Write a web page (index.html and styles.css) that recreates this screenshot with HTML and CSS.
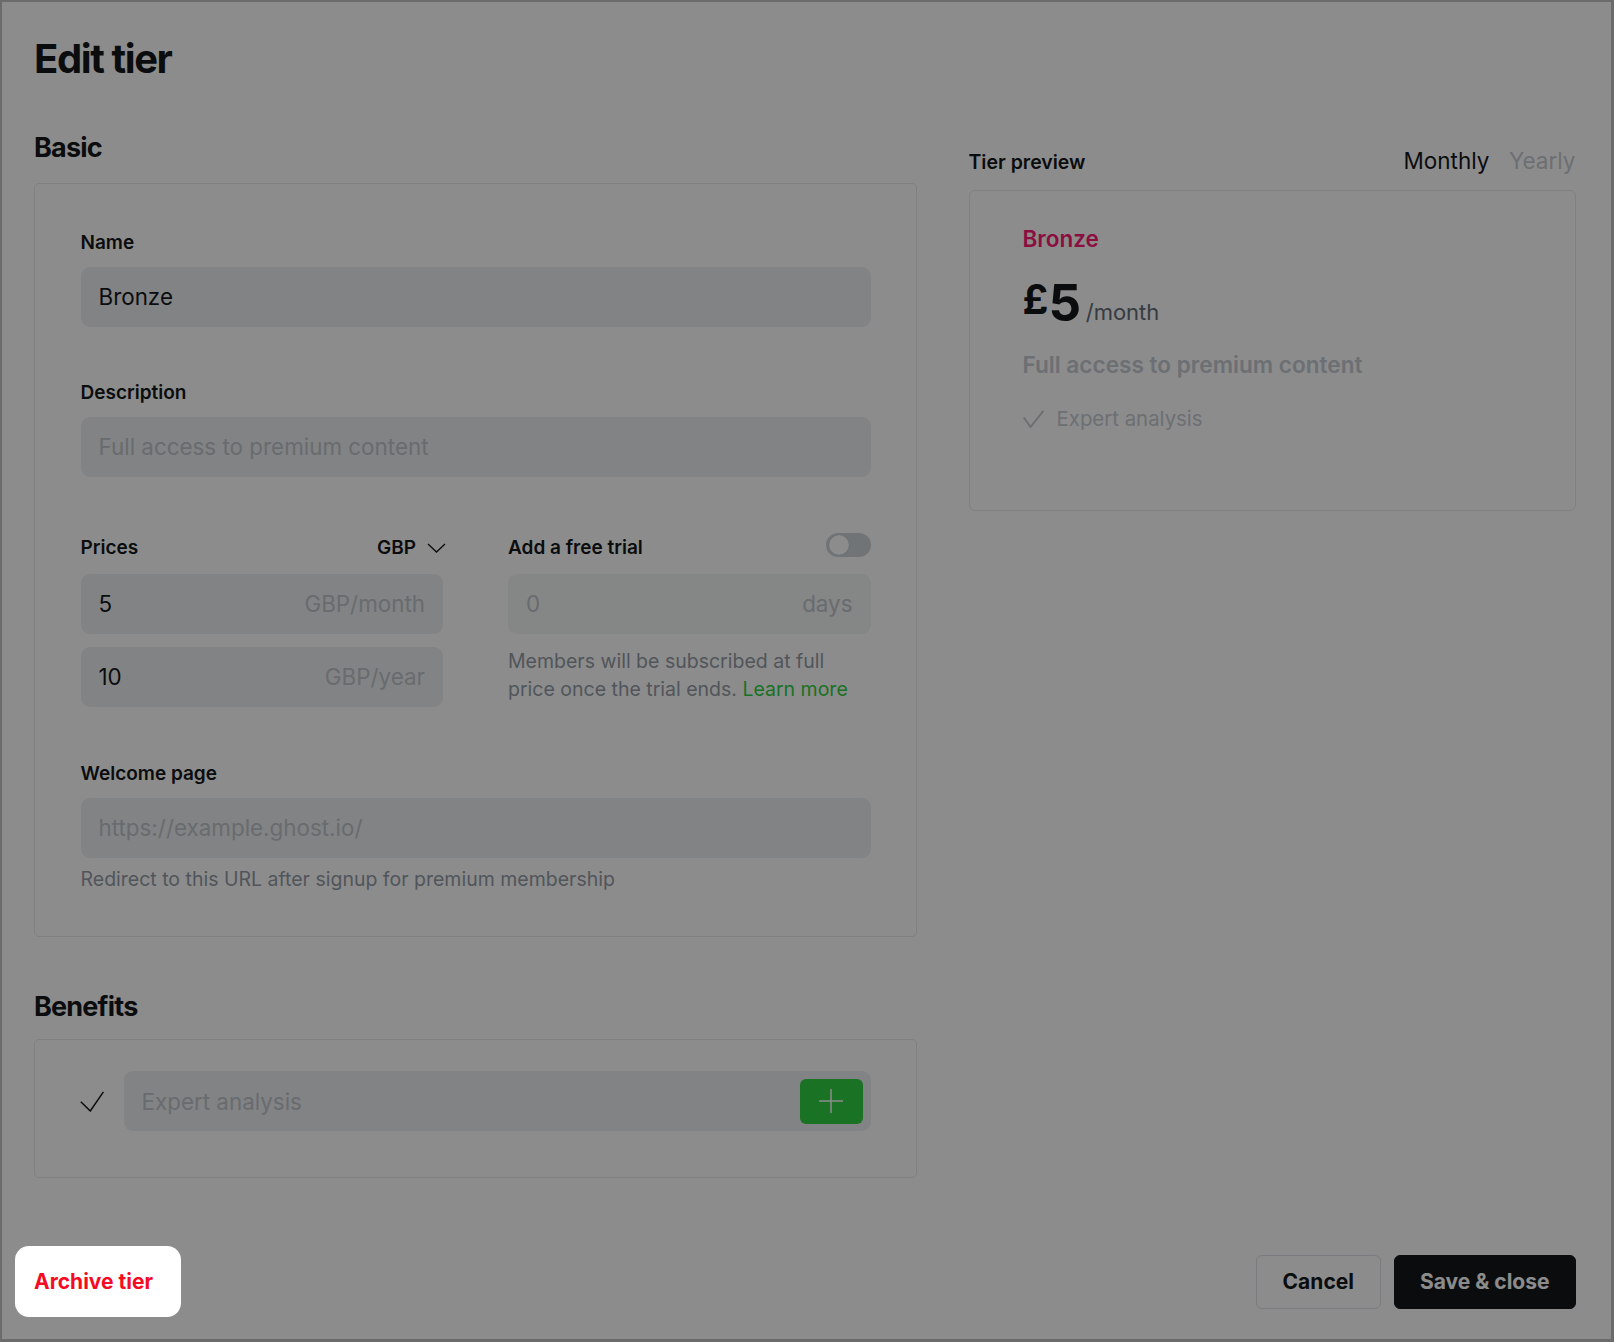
FILE: index.html
```html
<!DOCTYPE html>
<html lang="en">
<head>
<meta charset="utf-8">
<title>Edit tier</title>
<link rel="stylesheet" href="styles.css">
</head>
<body>
<div class="modal">
  <h1 class="title">Edit tier</h1>
  <div class="layout">
    <div class="left">
      <h2 class="section-title">Basic</h2>
      <div class="card basic-card">
        <div class="field">
          <label class="label">Name</label>
          <div class="input"><span class="value">Bronze</span></div>
        </div>
        <div class="field field-desc">
          <label class="label">Description</label>
          <div class="input"><span class="ph">Full access to premium content</span></div>
        </div>
        <div class="prices-row">
          <div class="col">
            <div class="col-head">
              <label class="label">Prices</label>
              <div class="currency">
                <span>GBP</span>
                <svg class="chevron" width="19" height="10" viewBox="0 0 19 10"><polyline points="1,1 9.5,9 18,1" fill="none" stroke="#15171A" stroke-width="1.3"/></svg>
              </div>
            </div>
            <div class="input price"><span class="value">5</span><span class="suffix">GBP/month</span></div>
            <div class="input price price-2"><span class="value">10</span><span class="suffix">GBP/year</span></div>
          </div>
          <div class="col">
            <div class="col-head">
              <label class="label">Add a free trial</label>
              <span class="toggle"><span class="knob"></span></span>
            </div>
            <div class="input price trial"><span class="ph">0</span><span class="suffix">days</span></div>
            <p class="hint hint-trial">Members will be subscribed at full price once the trial ends. <span class="link">Learn more</span></p>
          </div>
        </div>
        <div class="field field-welcome">
          <label class="label">Welcome page</label>
          <div class="input"><span class="ph">https://example.ghost.io/</span></div>
          <p class="hint hint-welcome">Redirect to this URL after signup for premium membership</p>
        </div>
      </div>
      <h2 class="section-title benefits-title">Benefits</h2>
      <div class="card benefits-card">
        <svg class="bcheck" width="24" height="21" viewBox="0 0 24 21"><polyline points="0.8,10.8 10.3,20 23.4,0.8" fill="none" stroke="#15171A" stroke-width="1.5"/></svg>
        <div class="input benefit-input">
          <span class="ph">Expert analysis</span>
          <span class="add-btn"><svg width="26" height="26" viewBox="0 0 26 26"><path d="M13 1V25M1 13H25" stroke="#fff" stroke-width="1.5"/></svg></span>
        </div>
      </div>
    </div>
    <div class="right">
      <div class="preview-head">
        <span class="preview-label">Tier preview</span>
        <div class="tabs"><span class="tab active">Monthly</span><span class="tab">Yearly</span></div>
      </div>
      <div class="preview-card">
        <div class="p-name">Bronze</div>
        <div class="p-price">
          <span class="p-cur">£</span><span class="p-amount">5</span><span class="p-per">/month</span>
        </div>
        <div class="p-desc">Full access to premium content</div>
        <div class="p-benefit">
          <svg width="21" height="18" viewBox="0 0 21 18"><polyline points="0.8,7.5 7.5,17 20.4,0.8" fill="none" stroke="#C5CBD1" stroke-width="2"/></svg>
          <span>Expert analysis</span>
        </div>
      </div>
    </div>
  </div>
  <div class="footer">
    <button class="archive">Archive tier</button>
    <div class="actions">
      <button class="btn cancel">Cancel</button>
      <button class="btn save">Save &amp; close</button>
    </div>
  </div>
</div>
<div class="dim"></div>
</body>
</html>
```
FILE: styles.css
```css
* { box-sizing: border-box; }
html, body { margin: 0; padding: 0; }
body {
  width: 1614px;
  height: 1342px;
  overflow: hidden;
  background: #c4c4c4;
  font-family: Inter, "Noto Sans", sans-serif;
  color: #15171A;
}
.modal {
  margin: 2px 3px 3px 2px;
  height: 1337px;
  background: #fff;
  padding: 32.5px 35.5px 30.5px 32px;
  display: flex;
  flex-direction: column;
}
.title {
  margin: 0;
  font-size: 40px;
  line-height: 48px;
  font-weight: 700;
  letter-spacing: -0.035em;
}
.layout {
  display: grid;
  grid-template-columns: 882.5px 1fr;
  column-gap: 52px;
  margin-top: 48px;
  align-items: start;
}
.section-title {
  margin: 0 0 18px;
  font-size: 27px;
  line-height: 34px;
  font-weight: 700;
  letter-spacing: -0.03em;
}
.benefits-title { margin-top: 53px; margin-bottom: 15px; }
.card {
  border: 1px solid #E6E9EC;
  border-radius: 5px;
}
.basic-card { padding: 45px 45px 43px 45.5px; }
.label {
  display: block;
  font-size: 19px;
  line-height: 27px;
  font-weight: 600;
  margin-bottom: 11px;
}
.input {
  height: 60px;
  border-radius: 9px;
  background: #EDEFF1;
  display: flex;
  align-items: center;
  padding: 0 18px;
  font-size: 22.4px;
}
.ph, .suffix { color: #BEC4CA; }
.suffix { margin-left: auto; }
.field-desc { margin-top: 52px; }
.prices-row {
  margin-top: 57px;
  display: grid;
  grid-template-columns: 1fr 1fr;
  column-gap: 65px;
}
.col-head {
  display: flex;
  justify-content: space-between;
  align-items: flex-start;
  height: 27px;
  margin-bottom: 13px;
}
.col-head .label { margin-bottom: 0; }
.currency {
  display: flex;
  align-items: center;
  gap: 11px;
  font-size: 19px;
  line-height: 27px;
  font-weight: 600;
  margin-right: -3px;
}
.chevron { margin-top: 2px; }
.price-2 { margin-top: 13px; }
.trial { background: #F2F4F5; }
.toggle {
  position: relative;
  width: 45px;
  height: 24px;
  border-radius: 12px;
  background: #CED4D9;
  margin-top: -1px;
}
.knob {
  position: absolute;
  left: 3px;
  top: 2px;
  width: 20px;
  height: 20px;
  border-radius: 50%;
  background: #fff;
  box-shadow: 0 0 1px rgba(0,0,0,0.25);
}
.hint {
  margin: 0;
  font-size: 19.5px;
  line-height: 28.8px;
  color: #949CA6;
}
.hint-trial { margin-top: 13px; }
.hint-welcome { margin-top: 7px; }
.link { color: #30CF43; }
.field-welcome { margin-top: 53px; }
.benefits-card {
  padding: 31px 45px 46px 45.5px;
  display: flex;
  align-items: center;
  gap: 20px;
}
.bcheck { flex: none; margin-left: -1px; }
.benefit-input {
  flex: 1;
  padding-right: 8px;
}
.add-btn {
  margin-left: auto;
  width: 63px;
  height: 45px;
  border-radius: 6px;
  background: #30CF43;
  display: flex;
  align-items: center;
  justify-content: center;
}
.right { margin-top: 13px; }
.preview-head {
  display: flex;
  justify-content: space-between;
  align-items: baseline;
  height: 34px;
  margin-bottom: 12px;
}
.preview-label {
  font-size: 19.5px;
  font-weight: 600;
}
.tabs { display: flex; align-items: baseline; }
.tab {
  font-size: 22.5px;
  line-height: 33.75px;
  color: #C5CBD1;
  margin-left: 19.5px;
}
.tab.active { color: #15171A; }
.preview-card {
  border: 1px solid #E6E9EC;
  border-radius: 6px;
  padding: 34px 54px 77px 53px;
}
.p-name {
  font-size: 22.5px;
  line-height: 1.25;
  font-weight: 600;
  color: #FF1A75;
}
.p-price {
  margin-top: 24px;
  display: flex;
  height: 51px;
}
.p-cur {
  align-self: flex-start;
  font-size: 40.5px;
  line-height: 1.115;
  font-weight: 700;
}
.p-amount {
  font-size: 51px;
  line-height: 1;
  font-weight: 700;
  letter-spacing: -0.025em;
}
.p-per {
  align-self: flex-end;
  margin-left: 6px;
  font-size: 22px;
  line-height: 1.375;
  color: #626D79;
}
.p-desc {
  margin-top: 21px;
  font-size: 22.6px;
  line-height: 1.375;
  font-weight: 600;
  color: #C5CBD1;
}
.p-benefit {
  margin-top: 25px;
  display: flex;
  align-items: center;
  gap: 13px;
  font-size: 20.4px;
  line-height: 1.375;
  color: #C5CBD1;
}
.footer {
  margin-top: auto;
  height: 54px;
  display: flex;
  align-items: center;
  justify-content: space-between;
}
.archive {
  position: relative;
  z-index: 20;
  height: 71px;
  margin: -8.5px 0 -8.5px -19px;
  padding: 0 28.5px 0 19px;
  border: 0;
  border-radius: 14px;
  background: #fff;
  color: #F50B23;
  font-family: inherit;
  font-size: 21px;
  font-weight: 700;
}
.actions { display: flex; gap: 13px; }
.btn {
  height: 54px;
  padding: 0 26px;
  border-radius: 6px;
  font-family: inherit;
  font-size: 21px;
  font-weight: 700;
}
.cancel {
  background: #fff;
  border: 1px solid #DDE1E5;
  color: #15171A;
}
.save {
  padding: 0 25px;
  background: #15171A;
  border: 1px solid #15171A;
  color: #fff;
}
.dim {
  position: fixed;
  inset: 0;
  background: rgba(0, 0, 0, 0.45);
  z-index: 10;
}
```
